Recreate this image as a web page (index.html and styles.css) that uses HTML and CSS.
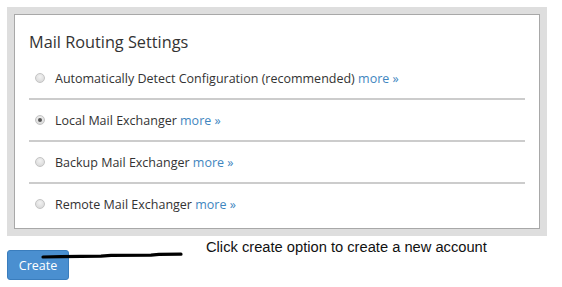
FILE: index.html
```html
<!DOCTYPE html>
<html lang="en">

<head>
    <meta charset="UTF-8">
    <meta name="viewport" content="width=device-width, initial-scale=1.0">
    <link rel="stylesheet" href="styles.css">
    <title>Mail Routing Settings</title>
</head>

<body>

    <div class="settings-panel">
        <div class="settings-box">
            <h2 class="settings-title">Mail Routing Settings</h2>
            <ul class="option-list">
                <li class="option-row">
                    <span class="radio"></span>
                    <span>Automatically Detect Configuration (recommended) <a href="#">more »</a></span>
                </li>
                <li class="option-row">
                    <span class="radio checked"></span>
                    <span>Local Mail Exchanger <a href="#">more »</a></span>
                </li>
                <li class="option-row">
                    <span class="radio"></span>
                    <span>Backup Mail Exchanger <a href="#">more »</a></span>
                </li>
                <li class="option-row">
                    <span class="radio"></span>
                    <span>Remote Mail Exchanger <a href="#">more »</a></span>
                </li>
            </ul>
        </div>
    </div>

    <div class="actions">
        <button class="create-button">Create</button>
    </div>

    <p class="note">Click create option to create a new account</p>
    <svg class="scribble" width="150" height="10" viewBox="0 0 150 10">
        <polyline points="2,7 20,6.6 60,6.2 70,5.4 110,5.2 118,4.4 140,4.2" fill="none" stroke="#000" stroke-width="3.2" stroke-linecap="round" stroke-linejoin="round" />
    </svg>

</body>

</html>
```

FILE: styles.css
```css
body {
    margin: 0;
    padding: 7px;
    background: #fff;
    font-family: 'Open Sans', sans-serif;
    color: #333;
    position: relative;
    height: 287px;
    box-sizing: border-box;
}

.settings-panel {
    width: 526px;
    padding: 7px;
    background-color: #dedede;
}

.settings-box {
    background-color: #fff;
    border: 1px solid #a8a8a8;
    padding: 0 14px 4px 14px;
}

.settings-title {
    margin: 0;
    padding-top: 16px;
    height: 43px;
    box-sizing: border-box;
    font-size: 16.3px;
    font-weight: 400;
    line-height: 22px;
    color: #333;
}

.option-list {
    list-style: none;
    margin: 0;
    padding: 0;
}

.option-row {
    display: flex;
    align-items: center;
    gap: 10px;
    height: 40px;
    padding-left: 6px;
    font-size: 12.5px;
    border-bottom: 2px solid #cccccc;
}

.option-row:last-child {
    border-bottom: none;
}

.option-row a {
    color: #3f86c0;
    text-decoration: none;
}

.radio {
    width: 10px;
    height: 10px;
    border-radius: 50%;
    box-sizing: border-box;
    border: 1px solid #c4c4c4;
    background: radial-gradient(circle at 50% 35%, #f2f2f2, #d4d4d4);
    position: relative;
}

.radio.checked::after {
    content: '';
    position: absolute;
    left: 2px;
    top: 2px;
    width: 4px;
    height: 4px;
    border-radius: 50%;
    background-color: #555;
}

.actions {
    margin-top: 14px;
}

.create-button {
    width: 62px;
    height: 30px;
    border: 1px solid #3a7dbd;
    border-radius: 3px;
    background-color: #4a8fd0;
    color: #fff;
    font-family: 'Open Sans', sans-serif;
    font-size: 12.5px;
    padding: 0;
}

.note {
    position: absolute;
    left: 206px;
    top: 239px;
    margin: 0;
    font-family: 'Liberation Sans', Arial, sans-serif;
    font-size: 14.7px;
    color: #111;
}

.scribble {
    position: absolute;
    left: 41px;
    top: 250px;
}
```
